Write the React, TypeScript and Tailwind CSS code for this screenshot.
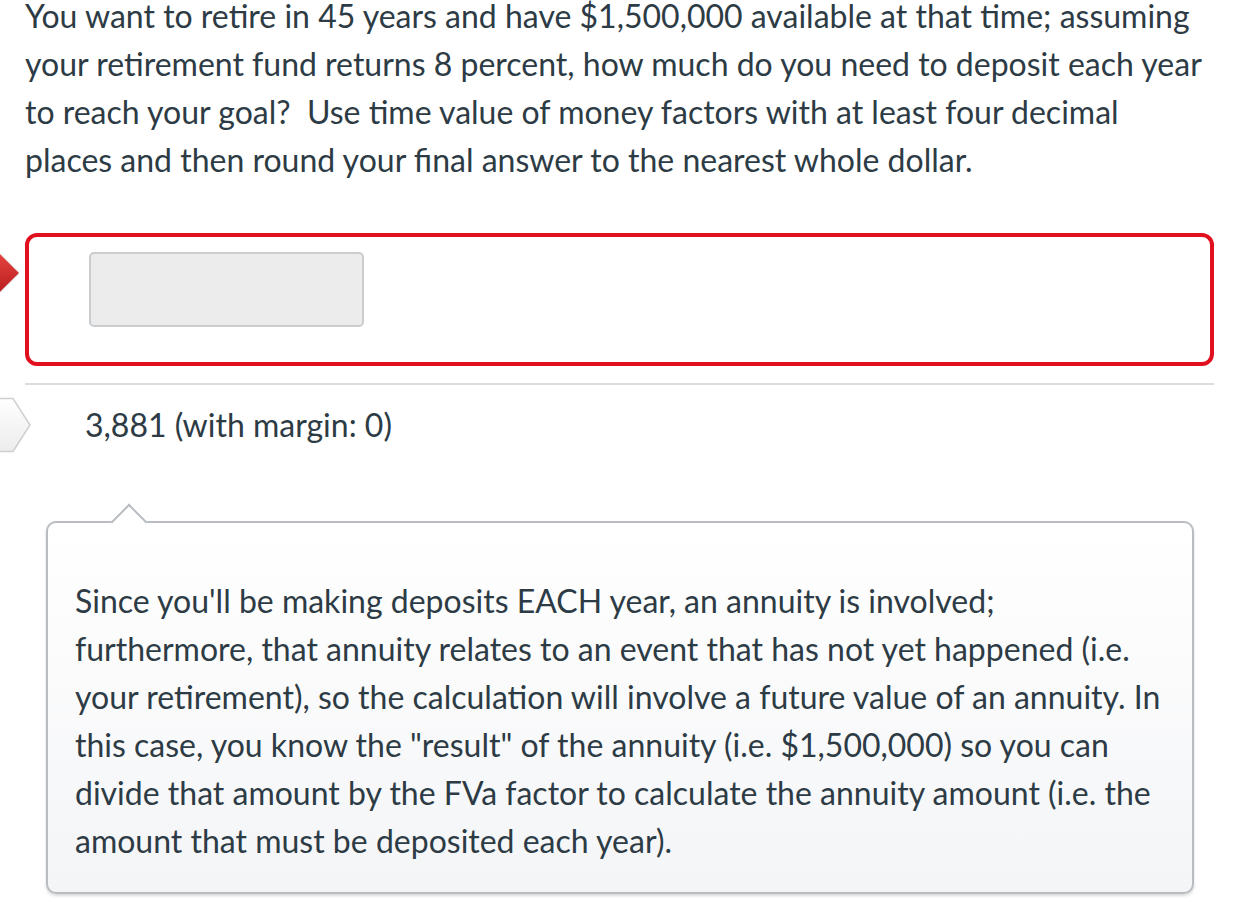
export default function App() {
  return (
    <div className="min-h-[912px] bg-white pl-[25px] pr-[26px] font-['Lato','Open_Sans',sans-serif] text-[32px] leading-[48px] text-[#2d3b45]">
      {/* Question */}
      <p className="-mt-[8px] whitespace-nowrap">
        You want to retire in 45 years and have $1,500,000 available at that time; assuming
        <br />
        your retirement fund returns 8 percent, how much do you need to deposit each year
        <br />
        to reach your goal?&nbsp; Use time value of money factors with at least four decimal
        <br />
        places and then round your final answer to the nearest whole dollar.
      </p>

      {/* Answer input (incorrect) */}
      <div className="relative mt-[49px]">
        <div className="absolute -left-[52px] top-[21px] h-[38px] w-[38px] rotate-45 bg-gradient-to-br from-[#ec4a45] to-[#b3111a] shadow-[0_0_2px_rgba(0,0,0,0.3)]" />
        <div className="rounded-[12px] border-[4px] border-[#e0101f] pl-[60px] pt-[15px] pb-[35px]">
          <div className="h-[75px] w-[275px] rounded-[5px] border-2 border-[#c9cdd0] bg-[#ececec]" />
        </div>
      </div>

      <div className="mt-[17px] h-[2px] bg-[#dcdcdc]" />

      {/* Correct answer */}
      <div className="relative mt-[12px] flex h-[55px] items-center pl-[60px]">
        <svg className="absolute -left-[50px] top-0" width="57" height="56" viewBox="0 0 57 56">
          <defs>
            <linearGradient id="wg" x1="0" y1="0" x2="0" y2="1">
              <stop offset="0" stopColor="#ffffff" />
              <stop offset="1" stopColor="#ececec" />
            </linearGradient>
          </defs>
          <path d="M0 1.5 H38 L55 28 L38 54.5 H0 Z" fill="url(#wg)" stroke="#cfcfcf" strokeWidth="1.5" />
        </svg>
        <span>3,881 (with margin: 0)</span>
      </div>

      {/* Feedback callout */}
      <div className="relative ml-[21px] mr-[20px] mt-[69px] rounded-[10px] border-2 border-[#b9bdc1] bg-gradient-to-b from-white to-[#f4f5f7] pl-[27px] pr-[15px] pt-[54px] pb-[27px] shadow-[0_2px_3px_rgba(0,0,0,0.15)]">
        <div className="absolute left-[68px] -top-[14px] h-[26px] w-[26px] rotate-45 border-l-2 border-t-2 border-[#b9bdc1] bg-white" />
        <p className="whitespace-nowrap">
          Since you'll be making deposits EACH year, an annuity is involved;
          <br />
          furthermore, that annuity relates to an event that has not yet happened (i.e.
          <br />
          your retirement), so the calculation will involve a future value of an annuity. In
          <br />
          this case, you know the "result" of the annuity (i.e. $1,500,000) so you can
          <br />
          divide that amount by the FVa factor to calculate the annuity amount (i.e. the
          <br />
          amount that must be deposited each year).
        </p>
      </div>
    </div>
  );
}
